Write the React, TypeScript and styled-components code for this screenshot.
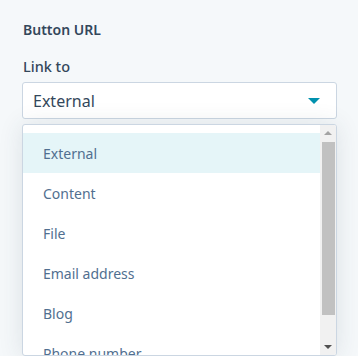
import React from "react";
import styled, { createGlobalStyle } from "styled-components";

const Global = createGlobalStyle`
  html, body { margin: 0; padding: 0; background: #f5f8fa; }
  body { font-family: "Noto Sans", Lato, sans-serif; overflow: hidden; }
`;

const Panel = styled.div`
  width: 358px;
  height: 356px;
  box-sizing: border-box;
  padding: 20px 21px 0 22px;
  display: flex;
  flex-direction: column;
  overflow: hidden;
`;

const SectionTitle = styled.div`
  font-size: 14px;
  font-weight: 600;
  color: #33475b;
  line-height: 20px;
  margin-left: 1px;
`;

const FieldLabel = styled.div`
  margin-top: 16px;
  font-size: 14.5px;
  font-weight: 500;
  color: #33475b;
  line-height: 20px;
  margin-left: 1px;
`;

const SelectBox = styled.div`
  margin-top: 6px;
  height: 39px;
  box-sizing: border-box;
  border: 1px solid #cbd6e2;
  border-radius: 3px;
  background: #fff;
  display: flex;
  align-items: center;
  justify-content: space-between;
  padding: 0 16px 0 10px;
  font-size: 16px;
  color: #33475b;
`;

const Caret = styled.div`
  width: 0;
  height: 0;
  border-left: 6px solid transparent;
  border-right: 6px solid transparent;
  border-top: 6px solid #0091ae;
`;

const Dropdown = styled.div`
  margin-top: 5px;
  height: 240px;
  border: 1px solid #cbd6e2;
  border-radius: 3px;
  background: #fff;
  box-shadow: 0 1px 24px rgba(45, 62, 80, 0.12);
  display: flex;
  overflow: hidden;
`;

const List = styled.div`
  flex: 1;
  padding-top: 8px;
  display: flex;
  flex-direction: column;
`;

const Option = styled.div<{ $active?: boolean }>`
  height: 40px;
  flex-shrink: 0;
  display: flex;
  align-items: center;
  padding-left: 20px;
  font-size: 14px;
  color: #516f90;
  background: ${(p) => (p.$active ? "#e5f5f8" : "transparent")};
`;

const ScrollTrack = styled.div`
  width: 16px;
  background: #f1f1f1;
  display: flex;
  flex-direction: column;
  align-items: center;
`;

const ArrowCell = styled.div`
  height: 16px;
  width: 100%;
  display: flex;
  align-items: center;
  justify-content: center;
`;

const ArrowUp = styled.div`
  width: 0;
  height: 0;
  border-left: 4px solid transparent;
  border-right: 4px solid transparent;
  border-bottom: 4px solid #a3a3a3;
`;

const ArrowDown = styled.div`
  width: 0;
  height: 0;
  border-left: 4px solid transparent;
  border-right: 4px solid transparent;
  border-top: 4px solid #505050;
`;

const Thumb = styled.div`
  width: 13px;
  height: 173px;
  background: #c1c1c1;
  margin-top: 1px;
`;

const Spacer = styled.div`
  flex: 1;
`;

const options = ["External", "Content", "File", "Email address", "Blog", "Phone number"];

export default function App() {
  return (
    <>
      <Global />
      <Panel>
        <SectionTitle>Button URL</SectionTitle>
        <FieldLabel>Link to</FieldLabel>
        <SelectBox>
          <span>External</span>
          <Caret />
        </SelectBox>
        <Dropdown>
          <List>
            {options.map((o, i) => (
              <Option key={o} $active={i === 0}>
                {o}
              </Option>
            ))}
          </List>
          <ScrollTrack>
            <ArrowCell>
              <ArrowUp />
            </ArrowCell>
            <Thumb />
            <Spacer />
            <ArrowCell>
              <ArrowDown />
            </ArrowCell>
          </ScrollTrack>
        </Dropdown>
      </Panel>
    </>
  );
}
